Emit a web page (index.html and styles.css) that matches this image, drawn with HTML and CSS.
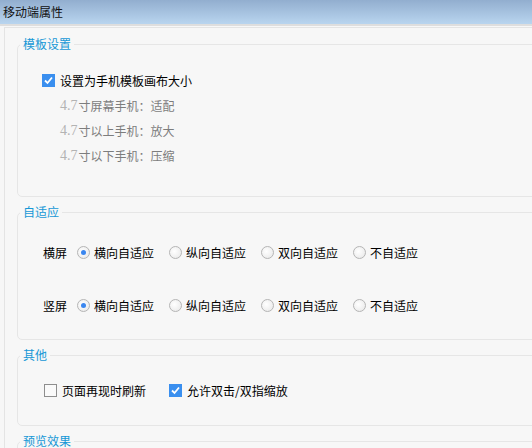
FILE: index.html
```html
<!DOCTYPE html>
<html lang="zh">
<head>
<meta charset="utf-8">
<title>移动端属性</title>
<link rel="stylesheet" href="styles.css">
</head>
<body>
<div class="titlebar">移动端属性</div>
<div class="panel">
  <fieldset class="group">
    <legend>模板设置</legend>
    <div class="content g1">
      <div class="row">
        <span class="cb checked"><svg viewBox="0 0 13 13" width="13" height="13"><path d="M3 6.5 L5.5 9 L10 3.5" fill="none" stroke="#fff" stroke-width="1.8"/></svg></span>
        <span>设置为手机模板画布大小</span>
      </div>
      <div class="row sub"><span class="num">4.7</span>寸屏幕手机：适配</div>
      <div class="row sub"><span class="num">4.7</span>寸以上手机：放大</div>
      <div class="row sub"><span class="num">4.7</span>寸以下手机：压缩</div>
    </div>
  </fieldset>

  <fieldset class="group">
    <legend>自适应</legend>
    <div class="content g2">
      <div class="row radios">
        <span class="lbl">横屏</span>
        <span class="opt"><span class="rd on"></span>横向自适应</span>
        <span class="opt"><span class="rd"></span>纵向自适应</span>
        <span class="opt"><span class="rd"></span>双向自适应</span>
        <span class="opt"><span class="rd"></span>不自适应</span>
      </div>
      <div class="row radios second">
        <span class="lbl">竖屏</span>
        <span class="opt"><span class="rd on"></span>横向自适应</span>
        <span class="opt"><span class="rd"></span>纵向自适应</span>
        <span class="opt"><span class="rd"></span>双向自适应</span>
        <span class="opt"><span class="rd"></span>不自适应</span>
      </div>
    </div>
  </fieldset>

  <fieldset class="group">
    <legend>其他</legend>
    <div class="content g3">
      <div class="row others">
        <span class="opt2"><span class="cb"></span>页面再现时刷新</span>
        <span class="opt2"><span class="cb checked"><svg viewBox="0 0 13 13" width="13" height="13"><path d="M3 6.5 L5.5 9 L10 3.5" fill="none" stroke="#fff" stroke-width="1.8"/></svg></span>允许双击/双指缩放</span>
      </div>
    </div>
  </fieldset>

  <fieldset class="group">
    <legend>预览效果</legend>
    <div class="content g4"></div>
  </fieldset>
</div>
</body>
</html>
```
FILE: styles.css
```css
html, body {
  margin: 0;
  padding: 0;
  background: #f7f7f7;
  overflow: hidden;
  height: 448px;
}
body {
  font-family: "Noto Sans CJK SC", "Noto Sans", sans-serif;
  font-size: 12px;
  color: #000;
}
.titlebar {
  height: 24px;
  line-height: 24px;
  padding-left: 3px;
  background: linear-gradient(#92aecf, #b9d5ef);
  border-bottom: 2px solid #dedede;
  color: #111;
}
.panel {
  margin: 1px 0 0 4px;
  border-left: 1px solid #e4e4e4;
  border-top: 1px solid #e4e4e4;
  padding: 8px 0 0 12px;
}
.group {
  margin: 0 -10px 7px 0;
  padding: 0;
  border: 1px solid #e6e6e6;
  border-radius: 5px;
  min-width: 0;
}
.group legend {
  color: #1698d6;
  line-height: 16px;
  margin-left: 2px;
  padding: 0 3px;
}
.row {
  height: 25px;
  display: flex;
  align-items: center;
}
.g1 { padding: 16px 0 28px 24px; }
.g1 .sub {
  padding-left: 18px;
  color: #7d7d7d;
}
.num {
  font-family: "Liberation Serif", serif;
  color: #b3b3b3;
  font-size: 14px;
  margin-right: 1px;
}
.cb {
  width: 13px;
  height: 13px;
  box-sizing: border-box;
  border: 1px solid #8e8e8e;
  background: #fafafa;
  margin-right: 5px;
  display: inline-flex;
}
.cb.checked {
  border: none;
  background: #3a8fef;
}
.g2 { padding: 20px 0 21px 25px; }
.radios.second { margin-top: 28px; }
.lbl { width: 34px; }
.opt {
  display: inline-flex;
  align-items: center;
  margin-right: 15px;
}
.rd {
  width: 13px;
  height: 13px;
  box-sizing: border-box;
  border-radius: 50%;
  border: 1px solid #b5b5b5;
  background: radial-gradient(circle at 40% 40%, #ffffff 0%, #e6e6e6 100%);
  margin-right: 4px;
  position: relative;
}
.rd.on::after {
  content: "";
  position: absolute;
  left: 3px;
  top: 3px;
  width: 5px;
  height: 5px;
  border-radius: 50%;
  background: #3a86ef;
}
.g3 { padding: 15px 0 22px 26px; }
.opt2 {
  display: inline-flex;
  align-items: center;
  margin-right: 23px;
}
.g4 { height: 40px; }
```
